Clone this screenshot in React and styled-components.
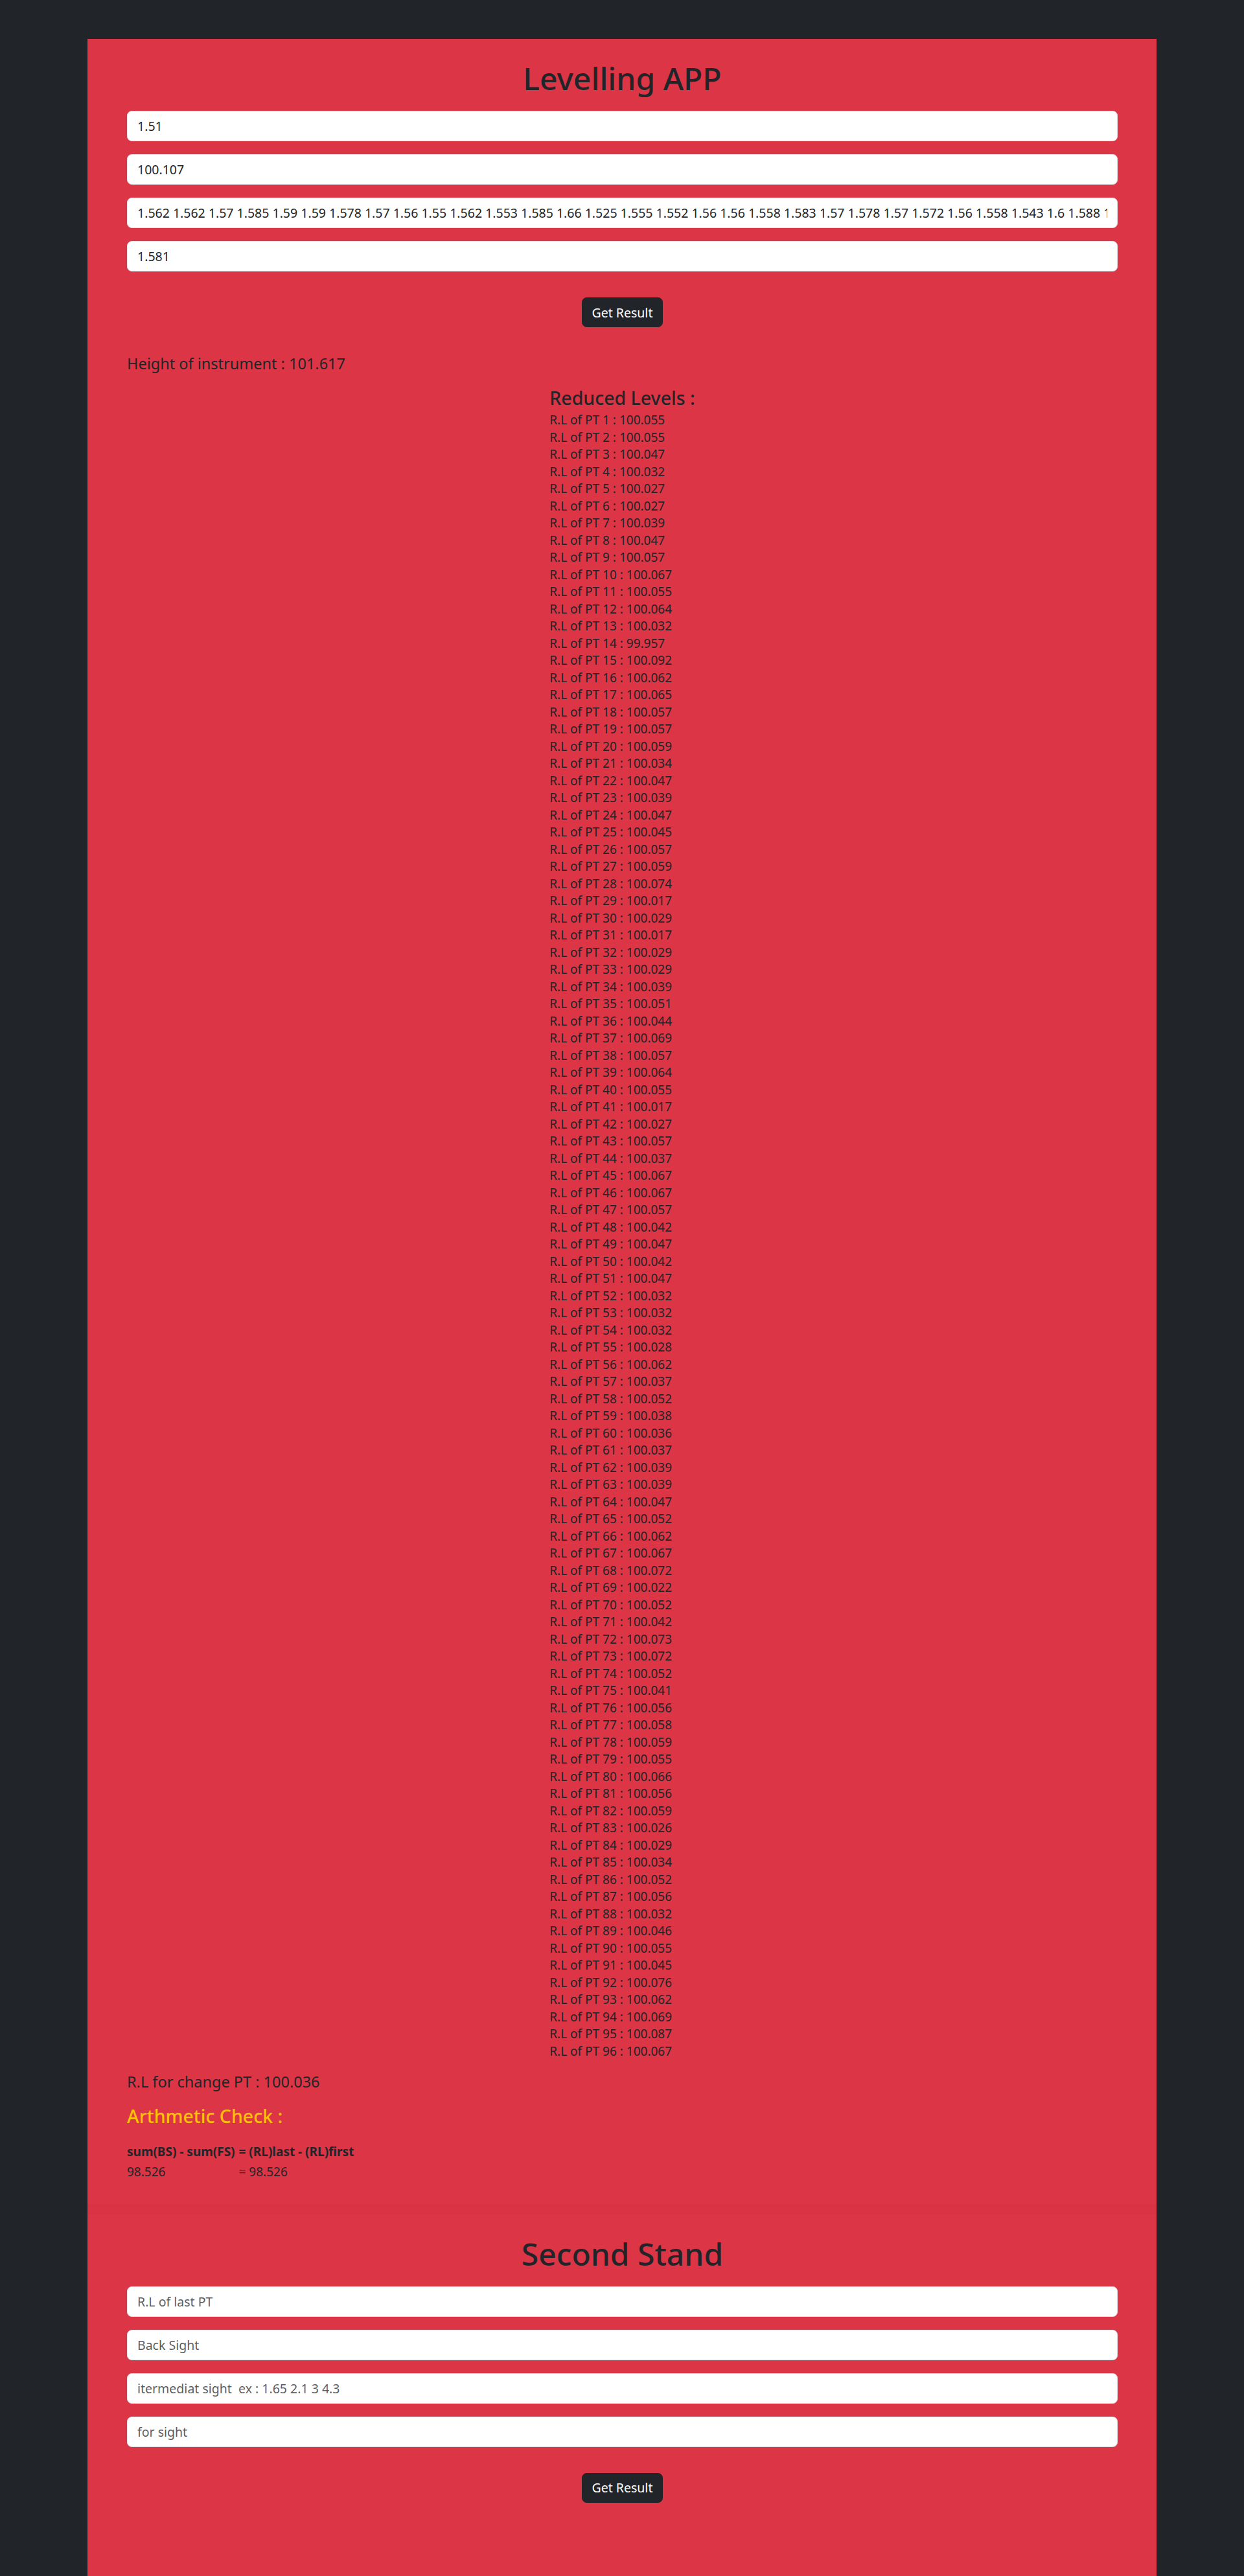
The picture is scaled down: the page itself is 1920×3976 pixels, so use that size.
import styled, { createGlobalStyle } from "styled-components";

const GlobalStyle = createGlobalStyle`
  *, *::before, *::after {
    box-sizing: border-box;
  }
  body {
    margin: 0;
    background: #212529;
    color: #212529;
    font-family: "Noto Sans", "Open Sans", sans-serif;
  }
`;

const Page = styled.div`
  padding-top: 60px;
`;

const Container = styled.main`
  width: 1650px;
  margin: 0 auto;
  background: #dc3545;
  padding: 31px 60px 113px 61px;
`;

const Title = styled.h1`
  margin: 0 0 20px;
  font-size: 48px;
  font-weight: 500;
  line-height: 60px;
  text-align: center;
`;

const Form = styled.form`
  display: flex;
  flex-direction: column;
  gap: 20px;
`;

const Field = styled.input`
  display: block;
  width: 100%;
  height: 47px;
  padding: 0 15px;
  font-family: inherit;
  font-size: 19.5px;
  color: #212529;
  background: #fff;
  border: 1px solid #dee2e6;
  border-radius: 7.5px;
  outline: none;

  &::placeholder {
    color: rgba(33, 37, 41, 0.75);
  }
`;

const ButtonRow = styled.div`
  display: flex;
  justify-content: center;
  margin-top: 40px;
`;

const Button = styled.button`
  height: 46px;
  padding: 0 15px;
  font-family: inherit;
  font-size: 19.5px;
  color: #fff;
  background: #212529;
  border: 1px solid #212529;
  border-radius: 7.5px;
  cursor: pointer;
`;

const Heading = styled.h5`
  margin: ${(p) => p.$mt || 0}px 0 0;
  font-size: ${(p) => (p.$large ? 28.5 : 23.5)}px;
  line-height: ${(p) => (p.$large ? 36 : 30)}px;
  font-weight: ${(p) => (p.$large ? 500 : 400)};
  color: ${(p) => (p.$warning ? "#ffc107" : "#212529")};
`;

const Results = styled.section`
  display: flex;
  justify-content: center;
  margin-top: 20px;
`;

const LevelList = styled.div`
  display: flex;
  flex-direction: column;
  align-items: flex-start;
`;

const LevelItem = styled.span`
  font-size: 19px;
  line-height: 26.5px;
`;

const ListGap = styled.div`
  height: 3px;
`;

const CheckTable = styled.div`
  display: grid;
  grid-template-columns: auto 1fr;
  column-gap: 6px;
  row-gap: 5px;
  margin-top: 24px;
  font-size: 19px;
  line-height: 26.25px;
`;

const CheckCell = styled.span`
  font-weight: ${(p) => (p.$bold ? 700 : 400)};
`;

const Divider = styled.div`
  height: 18px;
  margin: 35px -61px 0 -61px;
  background: rgba(0, 0, 0, 0.008);
`;

const SecondTitle = styled(Title)`
  margin-top: 30px;
`;

const levels = [
  100.055, 100.055, 100.047, 100.032, 100.027, 100.027, 100.039, 100.047,
  100.057, 100.067, 100.055, 100.064, 100.032, 99.957, 100.092, 100.062,
  100.065, 100.057, 100.057, 100.059, 100.034, 100.047, 100.039, 100.047,
  100.045, 100.057, 100.059, 100.074, 100.017, 100.029, 100.017, 100.029,
  100.029, 100.039, 100.051, 100.044, 100.069, 100.057, 100.064, 100.055,
  100.017, 100.027, 100.057, 100.037, 100.067, 100.067, 100.057, 100.042,
  100.047, 100.042, 100.047, 100.032, 100.032, 100.032, 100.028, 100.062,
  100.037, 100.052, 100.038, 100.036, 100.037, 100.039, 100.039, 100.047,
  100.052, 100.062, 100.067, 100.072, 100.022, 100.052, 100.042, 100.073,
  100.072, 100.052, 100.041, 100.056, 100.058, 100.059, 100.055, 100.066,
  100.056, 100.059, 100.026, 100.029, 100.034, 100.052, 100.056, 100.032,
  100.046, 100.055, 100.045, 100.076, 100.062, 100.069, 100.087, 100.067,
];

// intermediate sights are what gave these levels: HI - RL
const HI = 101.617;
const sights = levels
  .map((rl) => String(parseFloat((HI - rl).toFixed(3))))
  .join(" ");

export default function App() {
  return (
    <>
      <GlobalStyle />
      <Page>
        <Container>
          <Title>Levelling APP</Title>
          <Form onSubmit={(e) => e.preventDefault()}>
            <Field defaultValue="1.51" />
            <Field defaultValue="100.107" />
            <Field defaultValue={sights} />
            <Field defaultValue="1.581" />
          </Form>
          <ButtonRow>
            <Button type="button">Get Result</Button>
          </ButtonRow>

          <Heading $mt={41}>Height of instrument : 101.617</Heading>

          <Results>
            <LevelList>
              <Heading $large>Reduced Levels :</Heading>
              <ListGap />
              {levels.map((rl, i) => (
                <LevelItem key={i}>
                  R.L of PT {i + 1} : {rl.toFixed(3)}
                </LevelItem>
              ))}
            </LevelList>
          </Results>

          <Heading $mt={19}>R.L for change PT : 100.036</Heading>
          <Heading $large $warning $mt={20}>
            Arthmetic Check :
          </Heading>
          <CheckTable>
            <CheckCell $bold>sum(BS) - sum(FS)</CheckCell>
            <CheckCell $bold>= (RL)last - (RL)first</CheckCell>
            <CheckCell>98.526</CheckCell>
            <CheckCell>= 98.526</CheckCell>
          </CheckTable>

          <Divider />

          <SecondTitle>Second Stand</SecondTitle>
          <Form onSubmit={(e) => e.preventDefault()}>
            <Field placeholder="R.L of last PT" />
            <Field placeholder="Back Sight" />
            <Field placeholder="itermediat sight  ex : 1.65 2.1 3 4.3" />
            <Field placeholder="for sight" />
          </Form>
          <ButtonRow>
            <Button type="button">Get Result</Button>
          </ButtonRow>
        </Container>
      </Page>
    </>
  );
}
